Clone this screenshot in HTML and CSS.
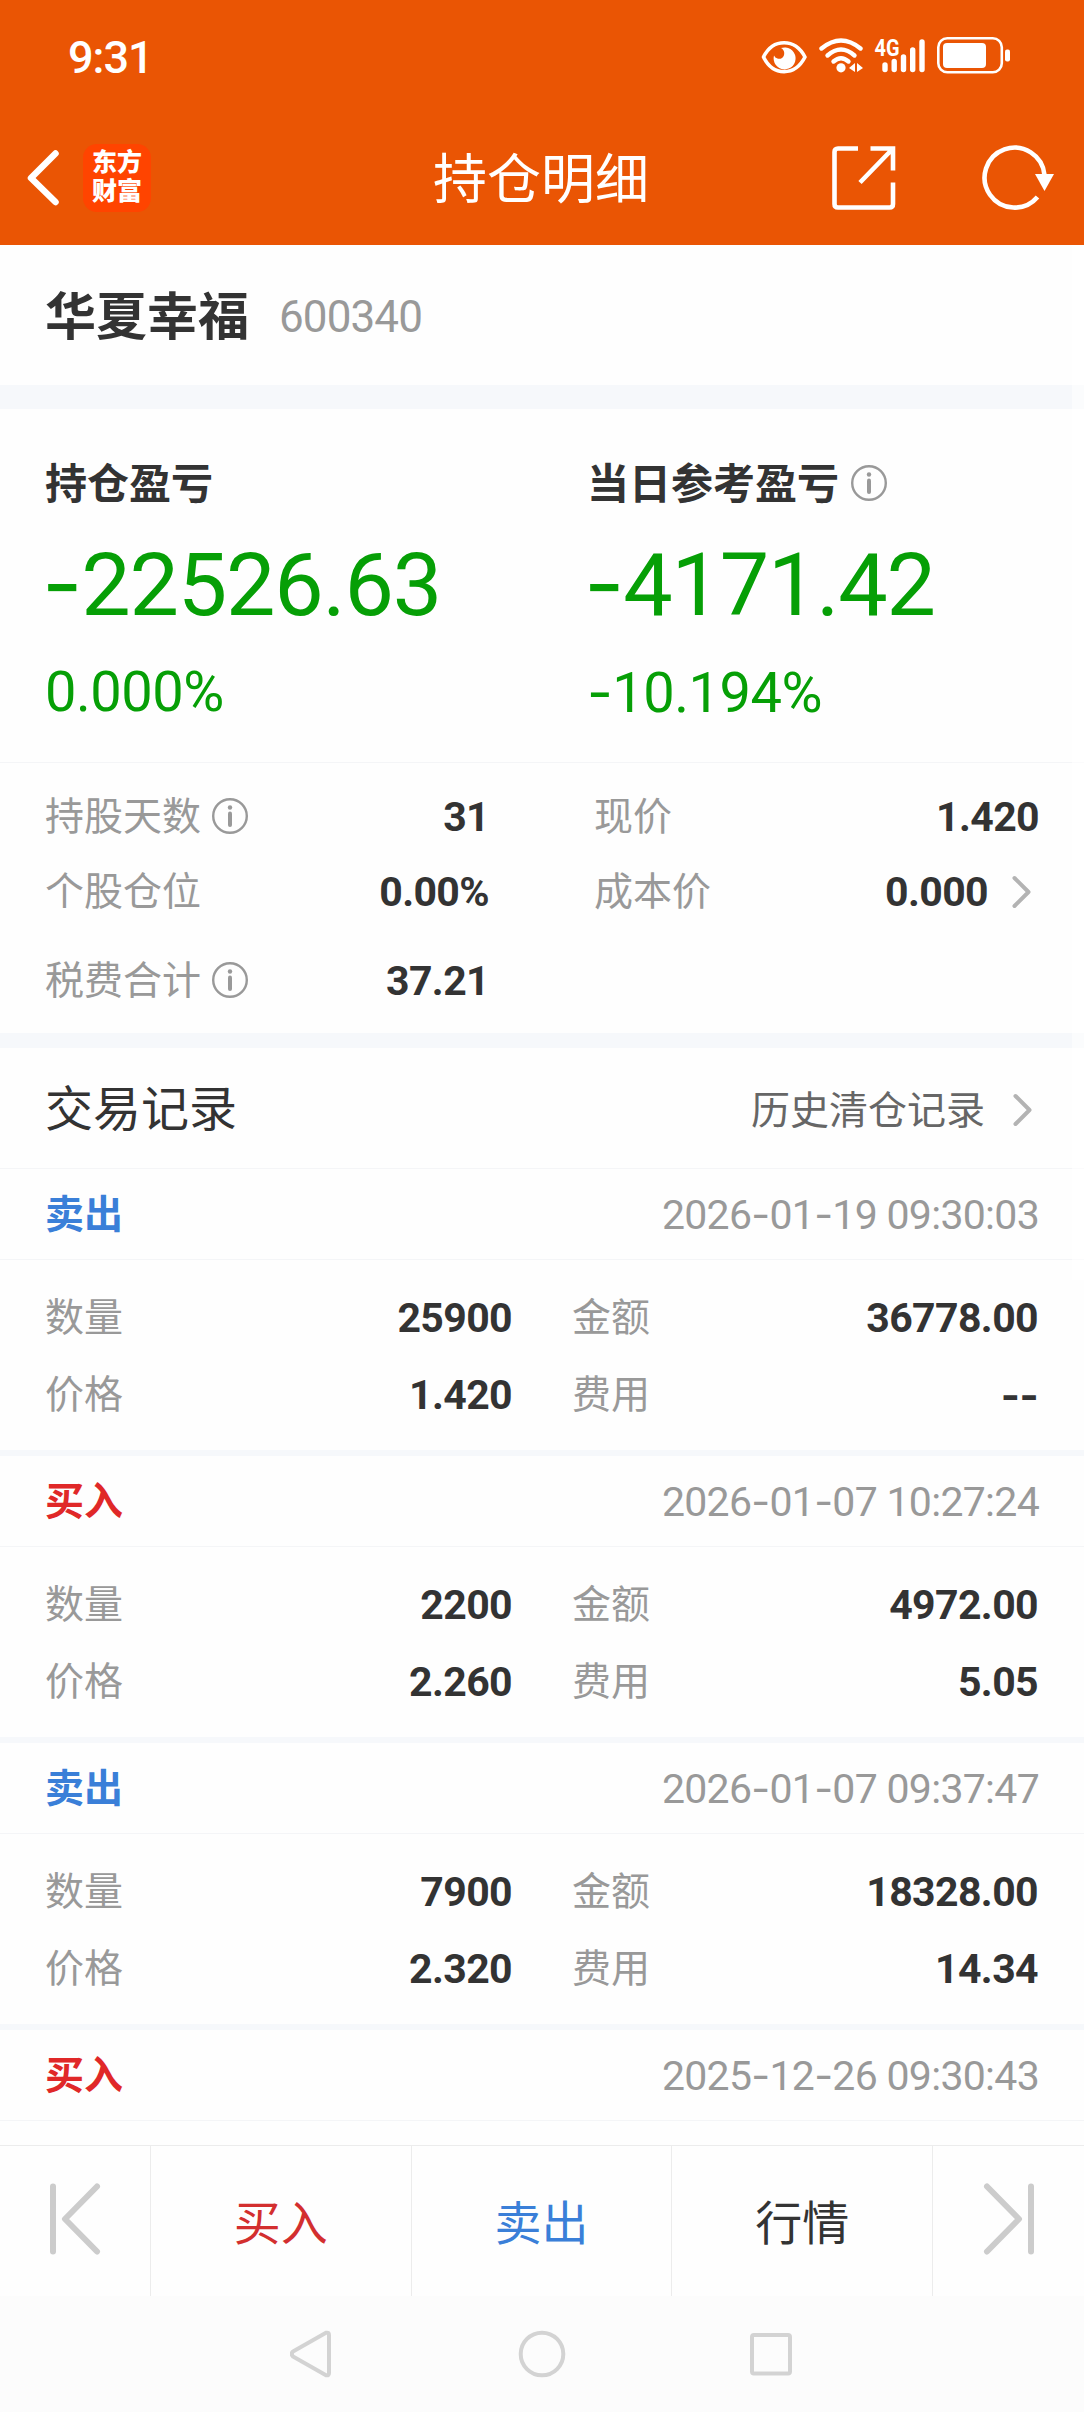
FILE: index.html
```
<!DOCTYPE html>
<html lang="zh-CN">
<head>
    <meta charset="UTF-8">
    <meta name="viewport" content="width=device-width, initial-scale=1.0">
    <title>持仓明细</title>
    <link rel="stylesheet" href="styles.css">
</head>
<body>
    <div class="page">
        <header class="header">
            <div class="status-bar">
                <span class="time">9:31</span>
                <svg class="status-icons" width="252" height="42" viewBox="760 34 252 42">
                    <!-- eye -->
                    <path d="M763.5 57C773 38 795 38 805 57C795 76.500 773 76.500 763.500 57Z" fill="none" stroke="#fff" stroke-width="3.6" stroke-linejoin="round"/>
                    <path d="M781 48A11 11 0 1 1 774 55.500A5.500 5.500 0 0 0 782 58A6 6 0 0 0 781 48Z" fill="#fff"/>
                    <!-- wifi -->
                    <g fill="none" stroke="#fff" stroke-width="4.400" stroke-linecap="round">
                        <path d="M821.500 48.500Q841 32.500 860.500 48.500"/>
                        <path d="M827.500 55.500Q841 43.500 854.500 55.500"/>
                        <path d="M833.500 61.500Q841 55 848.500 61.500"/>
                    </g>
                    <circle cx="841" cy="67.800" r="4.600" fill="#fff"/>
                    <path d="M849 68l6-5v9zM863 68l-6-5v9z" fill="#fff"/>
                    <!-- signal -->
                    <text x="874.500" y="55.500" class="net" textLength="25" lengthAdjust="spacingAndGlyphs">4G</text>
                    <g stroke="#fff" stroke-width="5.400" stroke-linecap="round">
                        <path d="M885 65v4.500M894.200 61.500v8M903.500 57v12.500M912.700 50v19.500M922 42v27.500"/>
                    </g>
                    <!-- battery -->
                    <rect x="938.300" y="38.300" width="63.500" height="34" rx="9" fill="none" stroke="#fff" stroke-width="2.600"/>
                    <rect x="943" y="43" width="43" height="25" rx="4" fill="#fff"/>
                    <rect x="1005" y="49.500" width="5" height="12" rx="2" fill="#fff"/>
                </svg>
            </div>
            <div class="nav-bar">
                <svg class="back" width="36" height="60" viewBox="0 0 36 60">
                    <path d="M31.500 5.500L7 30L31.500 54" fill="none" stroke="#fff" stroke-width="6.500" stroke-linecap="round" stroke-linejoin="round"/>
                </svg>
                <div class="logo">东方<br>财富</div>
                <h1>持仓明细</h1>
                <svg class="share" width="64" height="64" viewBox="0 0 64 64">
                    <path d="M26 2.500H6Q2.500 2.500 2.500 6V58Q2.500 61.500 6 61.500H57.500Q61 61.500 61 58V36.500M38.500 2.500H61V24.500M60 3.500L28 36.500" fill="none" stroke="#fff" stroke-width="4.600"/>
                </svg>
                <svg class="refresh" width="74" height="66" viewBox="0 0 74 66">
                    <path d="M55.500 52A30 30 0 1 1 62.500 30" fill="none" stroke="#fff" stroke-width="4.600"/>
                    <path d="M53 29H72L62.500 46Z" fill="#fff"/>
                </svg>
            </div>
        </header>

        <div class="stock">
            <span class="stock-name">华夏幸福</span>
            <span class="stock-code">600340</span>
        </div>

        <div class="profit">
            <div class="profit-item">
                <div class="profit-title">持仓盈亏</div>
                <div class="profit-value"><span class="dash">-</span>22526.63</div>
                <div class="profit-rate">0.000%</div>
            </div>
            <div class="profit-item">
                <div class="profit-title">当日参考盈亏
                    <svg class="info" viewBox="0 0 36 36"><circle cx="18" cy="18" r="16.800"/><circle class="dot" cx="18" cy="9.500" r="2.200"/><path d="M18 15.500V27"/></svg>
                </div>
                <div class="profit-value"><span class="dash">-</span>4171.42</div>
                <div class="profit-rate"><span class="dash">-</span>10.194%</div>
            </div>
        </div>

        <div class="stats">
            <div class="stat">
                <span class="label">持股天数
                    <svg class="info" viewBox="0 0 36 36"><circle cx="18" cy="18" r="16.800"/><circle class="dot" cx="18" cy="9.500" r="2.200"/><path d="M18 15.500V27"/></svg>
                </span>
                <b>31</b>
            </div>
            <div class="stat">
                <span class="label">现价</span>
                <b>1.420</b>
            </div>
            <div class="stat">
                <span class="label">个股仓位</span>
                <b>0.00%</b>
            </div>
            <div class="stat">
                <span class="label">成本价</span>
                <b>0.000</b>
                <svg class="arrow" viewBox="0 0 20 34"><path d="M2.500 3L16.500 17L2.500 31"/></svg>
            </div>
            <div class="stat">
                <span class="label">税费合计
                    <svg class="info" viewBox="0 0 36 36"><circle cx="18" cy="18" r="16.800"/><circle class="dot" cx="18" cy="9.500" r="2.200"/><path d="M18 15.500V27"/></svg>
                </span>
                <b>37.21</b>
            </div>
        </div>

        <div class="records-title">
            <h2>交易记录</h2>
            <a class="history">历史清仓记录</a>
            <svg class="arrow" viewBox="0 0 20 34"><path d="M2.500 3L16.500 17L2.500 31"/></svg>
        </div>

        <div class="records">
            <div class="record">
                <div class="record-head">
                    <span class="sell">卖出</span>
                    <span class="date">2026<span class="dash">-</span>01<span class="dash">-</span>19 09:30:03</span>
                </div>
                <div class="record-body">
                    <div class="cell"><span class="label">数量</span><b>25900</b></div>
                    <div class="cell"><span class="label">金额</span><b>36778.00</b></div>
                    <div class="cell"><span class="label">价格</span><b>1.420</b></div>
                    <div class="cell"><span class="label">费用</span><b><span class="dash">--</span></b></div>
                </div>
            </div>
            <div class="record">
                <div class="record-head">
                    <span class="buy">买入</span>
                    <span class="date">2026<span class="dash">-</span>01<span class="dash">-</span>07 10:27:24</span>
                </div>
                <div class="record-body">
                    <div class="cell"><span class="label">数量</span><b>2200</b></div>
                    <div class="cell"><span class="label">金额</span><b>4972.00</b></div>
                    <div class="cell"><span class="label">价格</span><b>2.260</b></div>
                    <div class="cell"><span class="label">费用</span><b>5.05</b></div>
                </div>
            </div>
            <div class="record">
                <div class="record-head">
                    <span class="sell">卖出</span>
                    <span class="date">2026<span class="dash">-</span>01<span class="dash">-</span>07 09:37:47</span>
                </div>
                <div class="record-body">
                    <div class="cell"><span class="label">数量</span><b>7900</b></div>
                    <div class="cell"><span class="label">金额</span><b>18328.00</b></div>
                    <div class="cell"><span class="label">价格</span><b>2.320</b></div>
                    <div class="cell"><span class="label">费用</span><b>14.34</b></div>
                </div>
            </div>
            <div class="record">
                <div class="record-head">
                    <span class="buy">买入</span>
                    <span class="date">2025<span class="dash">-</span>12<span class="dash">-</span>26 09:30:43</span>
                </div>
            </div>
        </div>

        <div class="tab-bar">
            <div class="tab-side">
                <svg width="54" height="72" viewBox="0 0 54 72"><path d="M5 3.500V68.500M49 3.500L17 36L49 68.500"/></svg>
            </div>
            <div class="tab tab-buy">买入</div>
            <div class="tab tab-sell">卖出</div>
            <div class="tab">行情</div>
            <div class="tab-side">
                <svg width="54" height="72" viewBox="0 0 54 72"><path d="M49 3.500V68.500M5 3.500L37 36L5 68.500"/></svg>
            </div>
        </div>

        <div class="system-nav">
            <svg width="504" height="48" viewBox="290 2330 504 48">
                <path d="M293 2351.500L326 2332.800Q329 2332 329 2335V2373Q329 2376 326 2375.200L293 2356.500Q290.500 2354 293 2351.500Z"/>
                <circle cx="542" cy="2354" r="21.300"/>
                <rect x="752" y="2335" width="38" height="38.500" rx="2"/>
            </svg>
        </div>

        <div class="scrollbar"></div>
    </div>
</body>
</html>
```
FILE: styles.css
```
* {
    box-sizing: border-box;
}
body {
    margin: 0;
    background-color: #fefefe;
    color: #333;
    font-family: Roboto, "Noto Sans CJK SC", sans-serif;
    line-height: 1;
}
svg {
    display: block;
    flex-shrink: 0;
}
.page {
    position: relative;
    display: flex;
    flex-direction: column;
    width: 1084px;
    height: 2412px;
    overflow: hidden;
}
.dash {
    font-family: Inter, sans-serif;
}

/* header */
.header {
    height: 245px;
    background-color: #ea5504;
    color: #fff;
}
.status-bar {
    display: flex;
    justify-content: space-between;
    height: 111px;
    padding: 34px 72px 0 68px;
}
.time {
    font-size: 45px;
    font-weight: 500;
    line-height: 48px;
    letter-spacing: -1px;
}
.net {
    font-family: Roboto, sans-serif;
    font-size: 23px;
    font-weight: 700;
    fill: #fff;
}
.nav-bar {
    display: flex;
    align-items: center;
    height: 134px;
    padding: 0 28px 0 24px;
}
.logo {
    width: 68px;
    height: 68px;
    margin-left: 23px;
    padding-top: 4px;
    border-radius: 14px;
    background-color: #ff4400;
    font-size: 25px;
    font-weight: 900;
    line-height: 29px;
    text-align: center;
}
h1 {
    flex: 1;
    margin: 0;
    padding-top: 5px;
    padding-left: 99px;
    font-size: 54px;
    font-weight: 400;
    line-height: 64px;
    text-align: center;
}
.refresh {
    margin-left: 86px;
}

/* stock name */
.stock {
    display: flex;
    align-items: center;
    height: 140px;
    padding: 4px 45px 0;
}
.stock-name {
    font-size: 51px;
    font-weight: 700;
}
.stock-code {
    margin-left: 30px;
    color: #999;
    font-size: 44px;
    letter-spacing: -0.9px;
}

/* profit */
.profit {
    display: flex;
    height: 378px;
    padding-top: 46px;
    border-top: 24px solid #f6f8fb;
    border-bottom: 1px solid #f4f5f7;
}
.profit-item {
    width: 542px;
    padding-left: 45px;
}
.profit-title {
    display: flex;
    align-items: center;
    gap: 12px;
    font-size: 42px;
    font-weight: 700;
    line-height: 60px;
}
.profit-value {
    margin-top: 18px;
    margin-left: -3px;
    color: #069f06;
    font-size: 88px;
    line-height: 100px;
    letter-spacing: -1.200px;
}
.profit-rate {
    margin-top: 27px;
    color: #069f06;
    font-size: 56px;
    line-height: 60px;
    letter-spacing: -0.5px;
}
.info {
    width: 36px;
    height: 36px;
    margin-top: -4px;
    fill: none;
    stroke: #999;
    stroke-width: 2.400;
}
.info path {
    stroke-width: 4;
    stroke-linecap: round;
}
.info .dot {
    fill: #999;
    stroke: none;
}

/* stats */
.stats {
    display: grid;
    grid-template-columns: 444px 445px;
    grid-template-rows: 75px 75px 103px;
    column-gap: 105px;
    height: 285px;
    padding: 17px 0 0 45px;
    border-bottom: 15px solid #f6f8fb;
}
.stat {
    display: flex;
    align-items: center;
}
.label {
    display: flex;
    align-items: center;
    gap: 11px;
    margin-right: auto;
    color: #999;
    font-size: 39px;
}
b {
    font-size: 41px;
    font-weight: 700;
    letter-spacing: -0.6px;
}
.arrow {
    width: 20px;
    height: 34px;
    margin-top: -2px;
    margin-left: 24px;
    margin-right: 7px;
    fill: none;
    stroke: #b3b3b3;
    stroke-width: 4;
    stroke-linecap: round;
    stroke-linejoin: round;
}

/* records */
.records-title {
    display: flex;
    align-items: center;
    height: 121px;
    padding: 3px 44px 0 45px;
    border-bottom: 1px solid #f4f5f7;
}
h2 {
    margin: 0 auto 0 0;
    font-size: 48px;
    font-weight: 400;
}
.history {
    padding-top: 4px;
    color: #666;
    font-size: 39px;
}
.records-title .arrow {
    margin-top: 0;
    margin-left: 28px;
}
.records {
    flex: 1;
    overflow: hidden;
}
.record {
    border-bottom: 6px solid #f6f8fb;
}
.record:last-child {
    border-bottom: none;
}
.record-head {
    display: flex;
    justify-content: space-between;
    align-items: center;
    height: 91px;
    padding: 2px 45px 0 45px;
    border-bottom: 1px solid #f4f5f7;
}
.sell, .buy {
    font-size: 39px;
    font-weight: 700;
}
.sell {
    color: #3a7fd8;
}
.buy {
    color: #e02828;
}
.date {
    color: #999;
    font-size: 41px;
    letter-spacing: -0.7px;
}
.record-body {
    display: grid;
    grid-template-columns: 467px 466px;
    grid-template-rows: 77px 77px;
    column-gap: 60px;
    height: 190px;
    padding: 20px 0 0 45px;
}
.cell {
    display: flex;
    align-items: center;
}

/* bottom tabs */
.tab-bar {
    display: flex;
    height: 151px;
    border-top: 1px solid #ececec;
}
.tab, .tab-side {
    display: flex;
    align-items: center;
    justify-content: center;
}
.tab {
    width: 261px;
    padding-top: 4px;
    border-right: 1px solid #ececec;
    font-size: 47px;
}
.tab-buy {
    color: #d32f2f;
}
.tab-sell {
    color: #3a7fd8;
}
.tab-side {
    width: 151px;
    padding-bottom: 4px;
}
.tab-side:first-child {
    border-right: 1px solid #ececec;
}
.tab-side svg {
    fill: none;
    stroke: #ccc;
    stroke-width: 6;
    stroke-linecap: round;
    stroke-linejoin: round;
}
.system-nav {
    display: flex;
    justify-content: center;
    height: 116px;
    padding-top: 34px;
    background-color: #fcfcfc;
}
.system-nav svg {
    fill: none;
    stroke: #d3d3d3;
    stroke-width: 4;
    stroke-linejoin: round;
}
.scrollbar {
    position: absolute;
    top: 245px;
    right: 0;
    width: 12px;
    height: 1035px;
    background-color: rgba(255, 255, 255, 0.6);
}
```
